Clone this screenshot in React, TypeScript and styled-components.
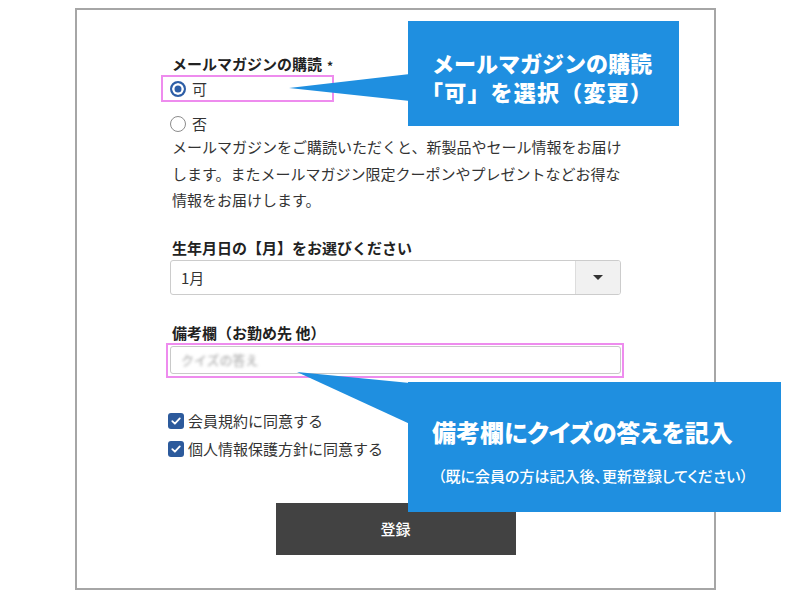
import React from "react";
import styled, {createGlobalStyle} from "styled-components";

const GlobalStyle = createGlobalStyle`
    html, body {
        margin: 0;
        padding: 0;
        background: #ffffff;
    }
    body {
        font-family: "Noto Sans CJK JP", "Noto Sans", sans-serif;
        color: #333333;
    }
`

const CheckIcon: React.FC = () => (
    <svg width="12" height="12" viewBox="0 0 12 12">
        <path d="M2.3 6.2 L4.9 8.7 L9.8 3.4" fill="none" stroke="#ffffff" strokeWidth="1.8"
              strokeLinecap="round" strokeLinejoin="round"/>
    </svg>
)

type CalloutProps = {
    left: number
    top: number
    width: number
    height: number
    tail: string
}

const Callout: React.FC<React.PropsWithChildren<CalloutProps>> = ({left, top, width, height, tail, children}) => (
    <>
        <TailLayer width="800" height="600" viewBox="0 0 800 600">
            <polygon points={tail} fill="#1f8fe0"/>
        </TailLayer>
        <CalloutBox style={{left, top, width, height}}>{children}</CalloutBox>
    </>
)

export default function App() {
    return (
        <Page>
            <GlobalStyle/>
            <Frame>
                <FieldLabel>メールマガジンの購読<Required>*</Required></FieldLabel>
                <RadioOption $highlight>
                    <RadioMark $checked/>
                    <OptionText>可</OptionText>
                </RadioOption>
                <RadioOption>
                    <RadioMark/>
                    <OptionText>否</OptionText>
                </RadioOption>
                <Note>
                    メールマガジンをご購読いただくと、新製品やセール情報をお届け<br/>
                    します。またメールマガジン限定クーポンやプレゼントなどお得な<br/>
                    情報をお届けします。
                </Note>

                <FieldLabel $gap={24}>生年月日の【月】をお選びください</FieldLabel>
                <SelectBox>
                    <SelectValue>1月</SelectValue>
                    <SelectArrow><Caret/></SelectArrow>
                </SelectBox>

                <FieldLabel $gap={28}>備考欄（お勤め先 他）</FieldLabel>
                <InputHighlight>
                    <TextInput>
                        <Blurred>クイズの答え</Blurred>
                    </TextInput>
                </InputHighlight>

                <Agreements>
                    <CheckRow>
                        <CheckBox><CheckIcon/></CheckBox>
                        <span>会員規約に同意する</span>
                    </CheckRow>
                    <CheckRow>
                        <CheckBox><CheckIcon/></CheckBox>
                        <span>個人情報保護方針に同意する</span>
                    </CheckRow>
                </Agreements>

                <SubmitButton type="button">登録</SubmitButton>
            </Frame>

            <Callout left={408} top={21} width={271} height={105} tail="289,88 410,74 410,101">
                <CalloutTitle $size={22} $line={29} $top={27}>
                    メールマガジンの購読<br/>
                    <SecondLine>「可」を選択（変更）</SecondLine>
                </CalloutTitle>
            </Callout>

            <Callout left={408} top={382} width={373} height={130} tail="297,372 410,383 410,424">
                <CalloutTitle $size={24} $line={30} $top={35} $palt>備考欄にクイズの答えを記入</CalloutTitle>
                <CalloutSub>（既に会員の方は記入後、更新登録してください）</CalloutSub>
            </Callout>
        </Page>
    )
}

const Page = styled.div`
    position: relative;
    width: 800px;
    height: 600px;
    overflow: hidden;
`

const Frame = styled.div`
    box-sizing: border-box;
    display: flex;
    flex-direction: column;
    margin: 8px 0 0 75px;
    width: 641px;
    height: 582px;
    border: 2px solid #a6a6a6;
    padding: 44px 93px 0;
`

const FieldLabel = styled.div<{ $gap?: number }>`
    margin-top: ${p => p.$gap ?? 0}px;
    font-size: 15px;
    font-weight: 700;
    line-height: 20px;
    color: #222222;
    padding-left: 2px;
`

const Required = styled.span`
    font-size: 12px;
    margin-left: 5px;
    position: relative;
    top: 1px;
`

const RadioOption = styled.div<{ $highlight?: boolean }>`
    box-sizing: border-box;
    display: flex;
    align-items: center;
    align-self: flex-start;
    ${p => p.$highlight ? `
        margin-left: -9px;
        width: 173px;
        height: 27px;
        padding-left: 7px;
        border: 2px solid #ee8cee;
    ` : `
        margin-top: 10px;
        height: 23px;
    `}
`

const RadioMark = styled.span<{ $checked?: boolean }>`
    box-sizing: border-box;
    width: 16px;
    height: 16px;
    border-radius: 50%;
    border: ${p => p.$checked ? "2px solid #2d5ea6" : "1.5px solid #8c8c8c"};
    background: ${p => p.$checked ? "#2d5ea6" : "#ffffff"};
    box-shadow: ${p => p.$checked ? "inset 0 0 0 2.5px #ffffff" : "none"};
`

const OptionText = styled.span`
    margin-left: 6px;
    font-size: 15px;
    line-height: 20px;
`

const Note = styled.p`
    margin: -1px 0 0;
    padding-left: 2px;
    font-size: 15px;
    line-height: 26.5px;
    letter-spacing: 0;
    white-space: nowrap;
    color: #333333;
`

const SelectBox = styled.div`
    box-sizing: border-box;
    display: flex;
    margin-top: 2px;
    height: 35px;
    border: 1px solid #cccccc;
    border-radius: 3px;
    overflow: hidden;
`

const SelectValue = styled.div`
    flex-grow: 1;
    display: flex;
    align-items: center;
    padding-left: 10px;
    font-size: 15px;
    color: #333333;
`

const SelectArrow = styled.div`
    width: 44px;
    display: flex;
    align-items: center;
    justify-content: center;
    background: #f1f1f1;
    border-left: 1px solid #dddddd;
`

const Caret = styled.span`
    width: 0;
    height: 0;
    border-left: 5px solid transparent;
    border-right: 5px solid transparent;
    border-top: 5px solid #333333;
`

const InputHighlight = styled.div`
    box-sizing: border-box;
    margin: 0 -3px 0 -4px;
    padding: 1px 1px 2px 2px;
    border: 2px solid #ee8cee;
`

const TextInput = styled.div`
    box-sizing: border-box;
    display: flex;
    align-items: center;
    height: 28px;
    padding-left: 10px;
    border: 1px solid #c9c9c9;
    border-radius: 3px;
    background: #ffffff;
`

const Blurred = styled.span`
    font-size: 13px;
    color: #a0a0a0;
    filter: blur(1.4px);
`

const Agreements = styled.div`
    display: flex;
    flex-direction: column;
    margin-top: 29px;
`

const CheckRow = styled.div`
    display: flex;
    align-items: center;
    height: 28px;
    margin-left: -2px;
    font-size: 15px;
    color: #333333;
`

const CheckBox = styled.span`
    width: 16px;
    height: 16px;
    margin-right: 4px;
    border-radius: 3px;
    background: #2c5a9c;
    display: flex;
    align-items: center;
    justify-content: center;
`

const SubmitButton = styled.button`
    align-self: center;
    margin-top: 40px;
    width: 240px;
    height: 52px;
    border: none;
    background: #424242;
    color: #ffffff;
    font-family: "Noto Sans CJK JP", sans-serif;
    font-size: 15px;
    font-weight: 500;
`

const TailLayer = styled.svg`
    position: absolute;
    left: 0;
    top: 0;
    pointer-events: none;
`

const CalloutBox = styled.div`
    position: absolute;
    box-sizing: border-box;
    padding-left: 24px;
    background: #1f8fe0;
    color: #ffffff;
`

const CalloutTitle = styled.div<{ $size: number, $line: number, $top: number, $palt?: boolean }>`
    padding-top: ${p => p.$top}px;
    font-size: ${p => p.$size}px;
    line-height: ${p => p.$line}px;
    font-weight: 900;
    font-feature-settings: ${p => p.$palt ? '"palt"' : "normal"};
    white-space: nowrap;
`

const SecondLine = styled.span`
    margin-left: -11px;
    letter-spacing: 1.2px;
`

const CalloutSub = styled.div`
    margin-top: 19px;
    padding-left: 6px;
    font-size: 15px;
    line-height: 20px;
    font-weight: 500;
    font-feature-settings: "palt";
    white-space: nowrap;
`
